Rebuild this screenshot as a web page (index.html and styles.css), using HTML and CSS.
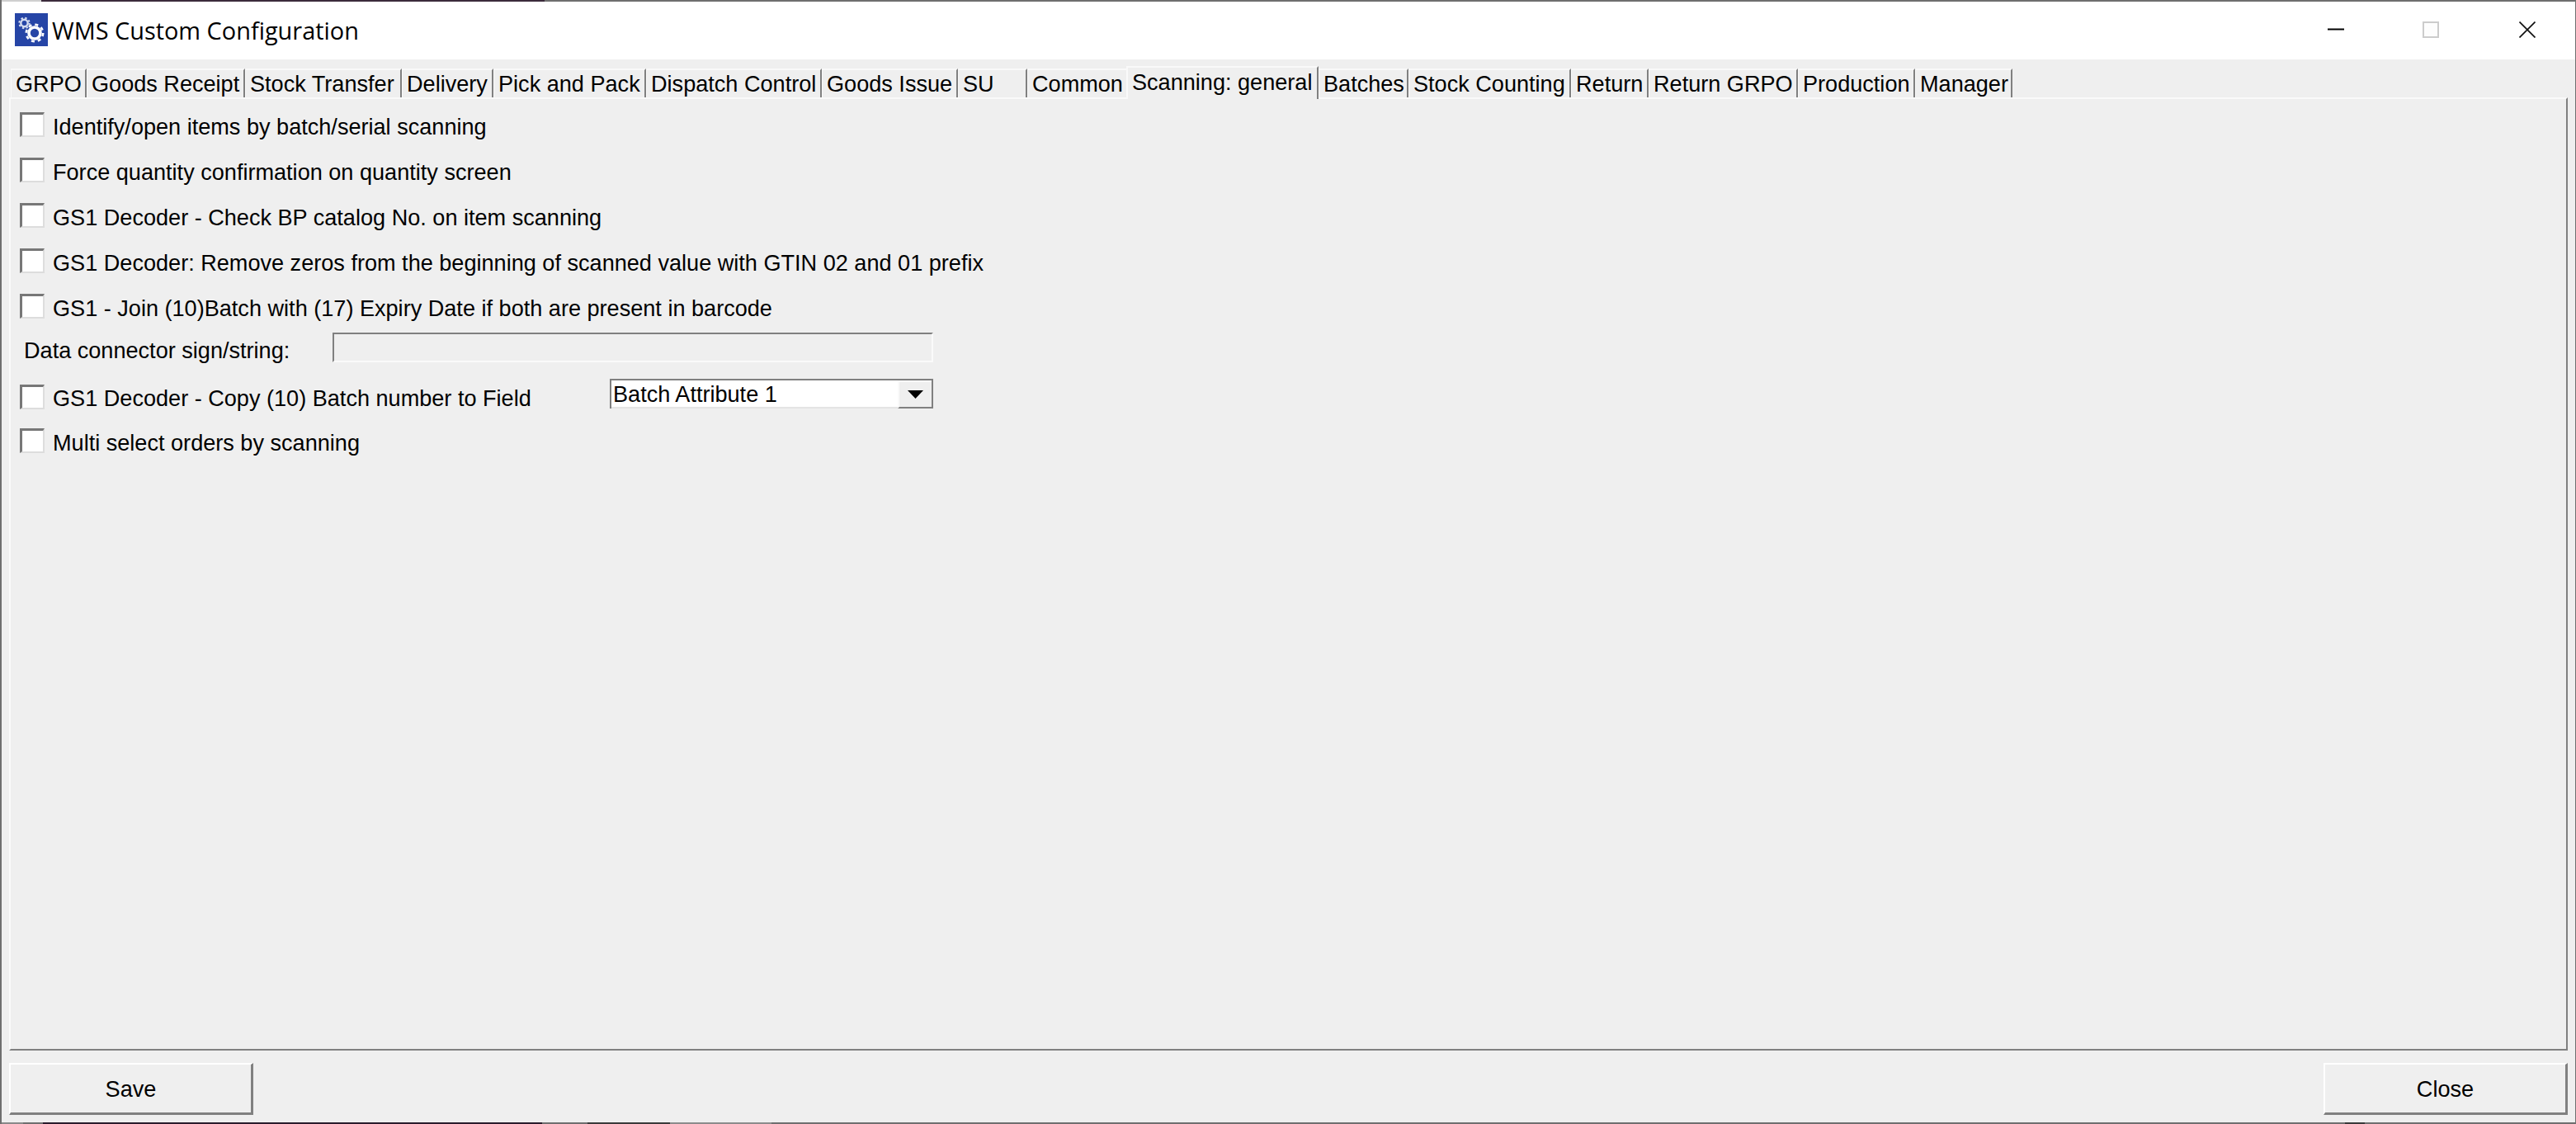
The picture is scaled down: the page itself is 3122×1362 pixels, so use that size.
FILE: index.html
```html
<!DOCTYPE html>
<html lang="en">
<head>
<meta charset="utf-8">
<title>WMS Custom Configuration</title>
<link rel="stylesheet" href="styles.css">
</head>
<body>
<div class="window">
  <div class="edge edge-top"></div>
  <header class="titlebar">
    <svg class="app-icon" width="40" height="40" viewBox="0 0 40 40">
      <rect width="40" height="40" fill="#2645a6"/>
      <circle cx="11.5" cy="12" r="4.2" fill="none" stroke="#d5dcf0" stroke-width="2.4"/>
      <circle cx="11.5" cy="12" r="6.2" fill="none" stroke="#d5dcf0" stroke-width="2" stroke-dasharray="2.4 2.47"/>
      <circle cx="24" cy="24" r="7" fill="none" stroke="#fff" stroke-width="3.6"/>
      <circle cx="24" cy="24" r="10.2" fill="none" stroke="#fff" stroke-width="2.6" stroke-dasharray="4 4.01"/>
    </svg>
    <span class="title">WMS Custom Configuration</span>
    <div class="controls">
      <span class="control"><svg width="20" height="20" viewBox="0 0 20 20"><path d="M0 9.5H20" stroke="#000" stroke-width="2"/></svg></span>
      <span class="control control-max"><svg width="20" height="20" viewBox="0 0 20 20"><rect x="1" y="1" width="18" height="18" fill="#fdfdfd" stroke="#ccc" stroke-width="2"/></svg></span>
      <span class="control"><svg width="20" height="20" viewBox="0 0 20 20"><path d="M0.5 0.5L19.5 19.5M19.5 0.5L0.5 19.5" stroke="#111" stroke-width="1.7"/></svg></span>
    </div>
  </header>
  <main class="body">
    <nav class="tabs">
      <span class="tab">GRPO</span>
      <span class="tab">Goods Receipt</span>
      <span class="tab">Stock Transfer</span>
      <span class="tab">Delivery</span>
      <span class="tab">Pick and Pack</span>
      <span class="tab">Dispatch Control</span>
      <span class="tab">Goods Issue</span>
      <span class="tab">SU</span>
      <span class="tab tab-plain">Common</span>
      <span class="tab tab-active">Scanning: general</span>
      <span class="tab">Batches</span>
      <span class="tab">Stock Counting</span>
      <span class="tab">Return</span>
      <span class="tab">Return GRPO</span>
      <span class="tab">Production</span>
      <span class="tab">Manager</span>
    </nav>
    <section class="panel">
      <div class="form">
        <label class="row"><span class="check"></span><span>Identify/open items by batch/serial scanning</span></label>
        <label class="row"><span class="check"></span><span>Force quantity confirmation on quantity screen</span></label>
        <label class="row"><span class="check"></span><span>GS1 Decoder - Check BP catalog No. on item scanning</span></label>
        <label class="row"><span class="check"></span><span>GS1 Decoder: Remove zeros from the beginning of scanned value with GTIN 02 and 01 prefix</span></label>
        <label class="row"><span class="check"></span><span>GS1 - Join (10)Batch with (17) Expiry Date if both are present in barcode</span></label>
        <div class="row row-input"><span class="field-label">Data connector sign/string:</span><span class="input"></span></div>
        <div class="row row-combo">
          <label class="combo-label"><span class="check"></span><span>GS1 Decoder - Copy (10) Batch number to Field</span></label>
          <div class="combo"><span class="combo-value">Batch Attribute 1</span><span class="combo-btn"><svg width="19" height="10" viewBox="0 0 19 10"><path d="M0 0H19L9.5 10Z" fill="#000"/></svg></span></div>
        </div>
        <label class="row"><span class="check"></span><span>Multi select orders by scanning</span></label>
      </div>
    </section>
    <footer class="footer">
      <button class="btn">Save</button>
      <button class="btn">Close</button>
    </footer>
  </main>
  <div class="edge edge-bottom"></div>
</div>
</body>
</html>
```
FILE: styles.css
```css
* { box-sizing: border-box; }
html, body { margin: 0; height: 100%; overflow: hidden; }
body { font-family: "Liberation Sans", Arial, sans-serif; font-size: 27.1px; color: #000; background: #efefef; }

.window { display: flex; flex-direction: column; height: 1362px; border-left: 2px solid #6f6f6f; border-right: 1px solid #6f6f6f; }
.edge { height: 2px; flex: none; }
.edge-top { background: linear-gradient(90deg, #cfcfcf 0 48px, #3b2b3b 48px 658px, #6f6f6f 658px); }
.edge-bottom { background: linear-gradient(90deg, #8a8a8a 0 26px, #6f6f6f 26px 50px, #2a1c2c 50px 655px, #6f6f6f 655px 710px, #3a3a3a 710px 810px, #8c8c8c 810px 933px, #6f6f6f 933px 2840px, #3a3a3a 2840px 2864px, #6f6f6f 2864px); }

.titlebar { display: flex; align-items: center; height: 70px; flex: none; background: #fff; padding-left: 16px; }
.app-icon { flex: none; margin-top: -2px; }
.title { font-family: "Open Sans", "Noto Sans", sans-serif; font-size: 28.9px; margin-left: 5px; margin-top: -2px; }
.controls { display: flex; margin-left: auto; }
.control { display: flex; align-items: center; justify-content: center; width: 116px; height: 70px; padding-bottom: 2px; }
.control-max { padding-right: 3px; }

.body { flex: 1; display: flex; flex-direction: column; background: #efefef; min-height: 0; }

.tabs { display: grid; grid-template-columns: 92px 192px 190px 111px 185px 213px 165px 84px 120px 233px 109px 197px 94px 181px 142px 118px; height: 47px; flex: none; padding: 11px 0 0 11px; }
.tab { display: flex; align-items: center; padding: 0 0 0 5px; border-top: 2px solid #f9f9f9; border-right: 2px solid #808080; border-left: 1px solid #f9f9f9; white-space: nowrap; }
.tab-plain { border-right: none; }
.tab-active { background: #efefef; border-left: 2px solid #f9f9f9; margin-top: -3px; margin-bottom: -1px; padding-bottom: 3px; position: relative; z-index: 1; }

.panel { flex: 1; min-height: 0; margin: -1px 9px 0 9px; border-top: 2px solid #fafafa; border-left: 2px solid #fafafa; border-right: 2px solid #808080; border-bottom: 2px solid #808080; }
.form { display: flex; flex-direction: column; padding: 6px 0 0 11px; }
.row { display: flex; align-items: center; height: 55px; }
.row-input { height: 50px; margin-top: -3px; }
.row-combo { height: 61px; }
.field-label { width: 379px; padding-left: 5px; padding-top: 4px; }
.check { display: block; flex: none; width: 30px; height: 30px; margin-right: 10px; margin-top: -5px; background: #fff; border-top: 3px solid #777; border-left: 3px solid #777; border-right: 2px solid #ddd; border-bottom: 2px solid #ddd; }
.input { display: block; width: 728px; height: 36px; margin-top: -4px; border-top: 2px solid #808080; border-left: 2px solid #808080; border-right: 2px solid #fafafa; border-bottom: 2px solid #fafafa; }
.combo-label { display: flex; align-items: center; width: 715px; padding-top: 9px; }
.combo { display: flex; align-items: stretch; width: 392px; height: 36px; margin-top: -4px; background: #fff; border-top: 2px solid #808080; border-left: 2px solid #808080; border-right: 2px solid #808080; }
.combo-value { flex: 1; padding-left: 2px; line-height: 34px; border-bottom: 2px solid #e4e4e4; }
.combo-btn { display: flex; align-items: center; justify-content: center; width: 41px; background: #efefef; border-top: 2px solid #fafafa; border-left: 2px solid #fafafa; border-bottom: 2px solid #808080; }

.footer { display: flex; justify-content: space-between; flex: none; height: 87px; padding: 15px 9px 9px 9px; }
.btn { width: 296px; height: 63px; padding: 2px 0 0; font: inherit; color: #000; background: #efefef; border-top: 2px solid #fff; border-left: 2px solid #fff; border-right: 3px solid #808080; border-bottom: 3px solid #808080; border-radius: 0; }
```
